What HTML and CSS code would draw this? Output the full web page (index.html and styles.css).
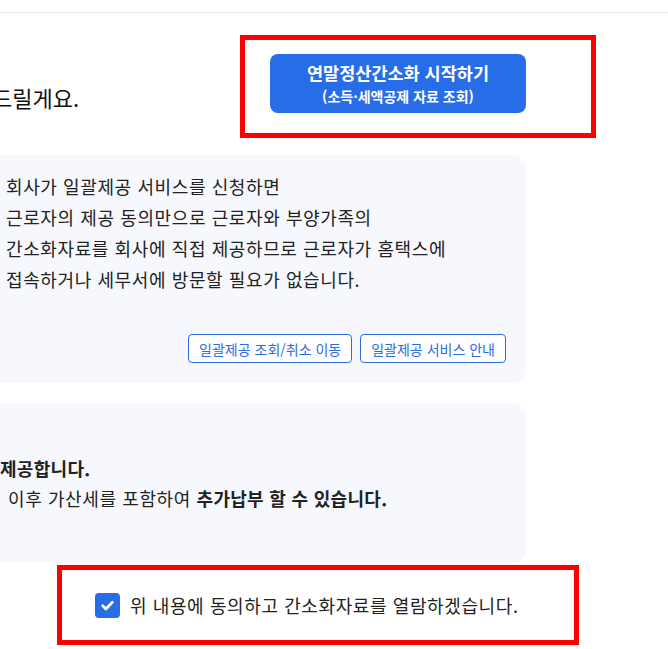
FILE: index.html
```html
<!DOCTYPE html>
<html lang="ko">
<head>
  <meta charset="UTF-8" />
  <meta name="viewport" content="width=device-width, initial-scale=1.0"/>
  <title>연말정산간소화</title>
  <link rel="stylesheet" href="styles.css">
</head>
<body>

  <div class="topbar"></div>

  <div class="main">
    <!-- Cabeçalho -->
    <div class="head-row">
      <h2 class="titulo">드릴게요.</h2>
      <div class="start-box">
        <button class="btn-start">
          <span class="btn-title">연말정산간소화 시작하기</span>
          <span class="btn-sub">(소득·세액공제 자료 조회)</span>
        </button>
      </div>
    </div>

    <!-- Cartão 1 -->
    <div class="card card-info">
      <p class="card-text">
        회사가 일괄제공 서비스를 신청하면<br>
        근로자의 제공 동의만으로 근로자와 부양가족의<br>
        간소화자료를 회사에 직접 제공하므로 근로자가 홈택스에<br>
        접속하거나 세무서에 방문할 필요가 없습니다.
      </p>
      <div class="card-actions">
        <button class="btn-line">일괄제공 조회/취소 이동</button>
        <button class="btn-line">일괄제공 서비스 안내</button>
      </div>
    </div>

    <!-- Cartão 2 -->
    <div class="card card-notice">
      <p class="notice-line"><b>제공합니다.</b></p>
      <p class="notice-line recuo">이후 가산세를 포함하여 <b>추가납부 할 수 있습니다.</b></p>
    </div>

    <!-- Consentimento -->
    <div class="agree-box">
      <label class="agree">
        <span class="check">
          <svg width="15" height="15" viewBox="0 0 14 14"><path d="M2.5 7.3l3 3 6-6.3" fill="none" stroke="#fff" stroke-width="2.6" stroke-linecap="round" stroke-linejoin="round"/></svg>
        </span>
        위 내용에 동의하고 간소화자료를 열람하겠습니다.
      </label>
    </div>
  </div>

</body>
</html>
```

FILE: styles.css
```css
/* Estilos gerais */
body {
  font-family: "Noto Sans CJK KR", "Noto Sans", sans-serif;
  background-color: #fff;
  color: #222;
  margin: 0;
  padding: 0;
  overflow: hidden;
}

.topbar {
  height: 12px;
  border-bottom: 1px solid #e6e6e6;
}

/* Coluna principal */
.main {
  margin-left: -30px;
  width: 626px;
  display: flex;
  flex-direction: column;
}

/* Cabeçalho */
.head-row {
  display: flex;
  justify-content: space-between;
  align-items: flex-end;
  margin-top: 22px;
}

.titulo {
  margin: 0 0 26px 22px;
  font-size: 22px;
  font-weight: 400;
  line-height: 30px;
  color: #111;
}

.start-box {
  border: 5px solid #ff0000;
  padding: 14px 65px 20px 25px;
}

.btn-start {
  width: 256px;
  height: 59px;
  border: none;
  border-radius: 8px;
  background: #286de8;
  color: #fff;
  font-family: inherit;
  display: flex;
  flex-direction: column;
  align-items: center;
  justify-content: center;
  cursor: pointer;
}

.btn-title {
  font-size: 17.5px;
  font-weight: 700;
  line-height: 22px;
}

.btn-sub {
  margin-top: 3px;
  font-size: 14px;
  font-weight: 700;
  line-height: 19px;
}

/* Cartões */
.card {
  width: 556px;
  box-sizing: border-box;
  background: #f6f8fd;
  border-radius: 14px;
}

.card-info {
  margin-top: 17px;
  height: 228px;
  padding: 16px 20px 20px 36px;
  display: flex;
  flex-direction: column;
  justify-content: space-between;
}

.card-text {
  margin: 0;
  font-size: 18px;
  letter-spacing: 0.6px;
  line-height: 31px;
}

.card-actions {
  display: flex;
  justify-content: flex-end;
  gap: 8px;
}

.btn-line {
  height: 29px;
  padding: 0 10px;
  border: 1px solid #2d6be4;
  border-radius: 4px;
  background: #fff;
  color: #2d6be4;
  font-family: inherit;
  font-size: 14px;
  cursor: pointer;
}

.card-notice {
  margin-top: 20px;
  height: 160px;
  padding: 50px 20px 50px 30px;
}

.notice-line {
  margin: 0;
  font-size: 18px;
  letter-spacing: 0.6px;
  line-height: 30px;
}

.notice-line b {
  letter-spacing: 0.3px;
}

.notice-line.recuo {
  padding-left: 8px;
}

/* Consentimento */
.agree-box {
  margin: 2px 0 0 87px;
  width: 522px;
  height: 80px;
  box-sizing: border-box;
  border: 5px solid #ff0000;
  padding-left: 33px;
  display: flex;
  align-items: center;
}

.agree {
  display: flex;
  align-items: center;
  gap: 10px;
  font-size: 18px;
  letter-spacing: 0.6px;
  font-weight: 400;
  color: #222;
}

.check {
  width: 25px;
  height: 25px;
  border-radius: 4px;
  background: #286de8;
  display: flex;
  align-items: center;
  justify-content: center;
}
```
